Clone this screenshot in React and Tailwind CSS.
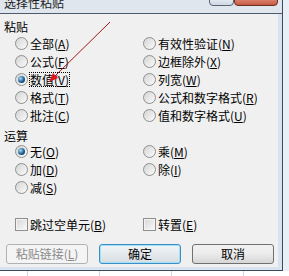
import React from 'react'

const font = { fontFamily: '"Noto Sans CJK SC", "Noto Sans", sans-serif' }

function Key({ k }) {
  return (
    <>
      (<span className="underline underline-offset-1">{k}</span>)
    </>
  )
}

function Radio({ label, k, checked, focused }) {
  return (
    <div className="flex h-[18px] items-center gap-[1px]">
      <div className="flex h-[13px] w-[13px] shrink-0 items-center justify-center rounded-full border border-[#8e8f8f] bg-gradient-to-br from-[#d4d4d4] to-[#fbfbfb]">
        {checked && (
          <div className="h-[7px] w-[7px] rounded-full bg-[radial-gradient(circle_at_35%_35%,#a8dcfa,#1d5f92_55%,#0c2c48)]" />
        )}
      </div>
      <span
        className={
          'border leading-[13px] ' +
          (focused ? 'border-dotted border-black' : 'border-transparent')
        }
      >
        {label}
        <Key k={k} />
      </span>
    </div>
  )
}

function Check({ label, k }) {
  return (
    <div className="flex h-[18px] items-center gap-[1px]">
      <div className="h-[13px] w-[13px] shrink-0 border border-[#8e8f8f] bg-gradient-to-br from-[#d6d6d6] to-[#fbfbfb] shadow-[inset_0_0_0_1px_#f4f4f4]" />
      <span className="border border-transparent leading-[13px]">
        {label}
        <Key k={k} />
      </span>
    </div>
  )
}

export default function App() {
  return (
    <div
      className="relative flex h-[276px] w-[289px] flex-col overflow-hidden bg-white text-[12px] text-black"
      style={font}
    >
      <div className="flex h-[271px]">
        {/* dialog */}
        <div className="flex w-[283px] flex-col border-r border-b border-[#3b4b5b]">
          <div className="flex h-[14px] shrink-0 items-start overflow-hidden border-b border-[#4d5c6d] bg-[#dfe6ee] pl-[4px] pr-[4px]">
            <span className="-mt-[5px] leading-[16px] text-[#1b1b1b]">选择性粘贴</span>
            <div className="ml-auto flex h-[6px]">
              <div className="-mt-[3px] h-[9px] w-[25px] rounded-b-[4px] border border-[#5a6673] bg-gradient-to-b from-[#e9eef3] to-[#cfd8e2]" />
              <div className="-mt-[3px] h-[9px] w-[44px] rounded-b-[4px] border border-[#6b2e25] bg-gradient-to-b from-[#e08a78] to-[#c65a45]" />
            </div>
          </div>
          <div className="flex flex-1 flex-col border-r-[4px] border-b-[3px] border-[#d8e3ef] bg-[#f0f0f0]">
            <div className="pl-[4px] pt-[6px] leading-[14px]">粘贴</div>
            <div className="grid grid-cols-[128px_1fr] pl-[15px]">
              <div className="flex flex-col">
                <Radio label="全部" k="A" />
                <Radio label="公式" k="F" />
                <Radio label="数值" k="V" checked focused />
                <Radio label="格式" k="T" />
                <Radio label="批注" k="C" />
              </div>
              <div className="flex flex-col">
                <Radio label="有效性验证" k="N" />
                <Radio label="边框除外" k="X" />
                <Radio label="列宽" k="W" />
                <Radio label="公式和数字格式" k="R" />
                <Radio label="值和数字格式" k="U" />
              </div>
            </div>
            <div className="mt-[5px] pl-[4px] leading-[13px]">运算</div>
            <div className="grid grid-cols-[128px_1fr] pl-[15px]">
              <div className="flex flex-col">
                <Radio label="无" k="O" checked />
                <Radio label="加" k="D" />
                <Radio label="减" k="S" />
              </div>
              <div className="flex flex-col">
                <Radio label="乘" k="M" />
                <Radio label="除" k="I" />
              </div>
            </div>
            <div className="mt-[19px] grid grid-cols-[128px_1fr] pl-[15px]">
              <Check label="跳过空单元" k="B" />
              <Check label="转置" k="E" />
            </div>
            <div className="mt-[11px] flex gap-[11px] pl-[6px]">
              <div className="flex h-[20px] w-[82px] items-center justify-center rounded-[3px] border border-[#adb2b5] bg-[#f4f4f4] text-[#8a8a8a]">
                粘贴链接<Key k="L" />
              </div>
              <div className="flex h-[20px] w-[82px] items-center justify-center rounded-[3px] border border-[#3c8fc4] bg-gradient-to-b from-[#f2f5f7] to-[#d7dee3] shadow-[inset_0_0_0_1px_#9fe0f8]">
                确定
              </div>
              <div className="flex h-[20px] w-[82px] items-center justify-center rounded-[3px] border border-[#707070] bg-gradient-to-b from-[#f2f2f2] via-[#ebebeb] to-[#d6d6d6]">
                取消
              </div>
            </div>
          </div>
        </div>
        <div className="flex-1 bg-[#e8eff6]" />
      </div>
      {/* sheet grid below the dialog */}
      <div className="flex flex-1 bg-white">
        <div className="w-[28px] border-r border-[#cfd7e2]" />
        <div className="w-[72px] border-r border-[#cfd7e2]" />
        <div className="w-[72px] border-r border-[#cfd7e2]" />
        <div className="w-[72px] border-r border-[#cfd7e2]" />
      </div>

      <svg className="absolute left-0 top-0" width="289" height="276">
        <line x1="110" y1="22" x2="55" y2="76" stroke="#a5141a" strokeWidth="1" />
        <polygon points="49,82 58,78 53,73" fill="#e3141c" />
      </svg>
    </div>
  )
}
